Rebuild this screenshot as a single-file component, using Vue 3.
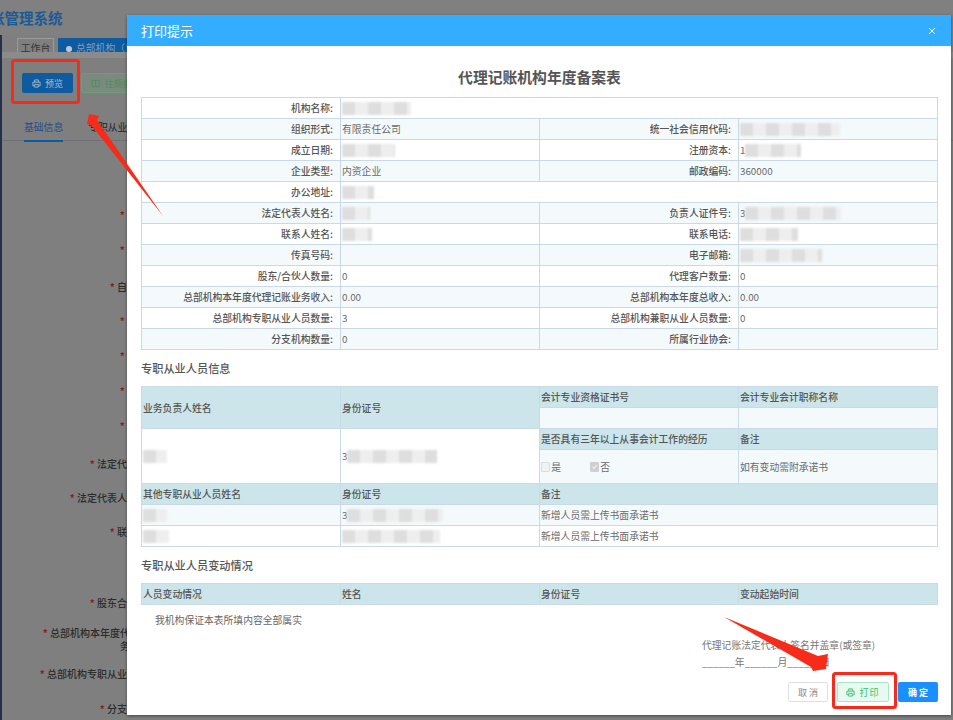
<script setup>
// Text value plus optional smudge: the reference has these cells blurred out.
const cell = (text = '', smudge = 0) => ({ text, smudge })

const infoRows = [
  { label: '机构名称:', value: cell('', 69) },
  { label: '组织形式:', value: cell('有限责任公司'), label2: '统一社会信用代码:', value2: cell('', 100) },
  { label: '成立日期:', value: cell('', 53), label2: '注册资本:', value2: cell('1', 56) },
  { label: '企业类型:', value: cell('内资企业'), label2: '邮政编码:', value2: cell('360000') },
  { label: '办公地址:', value: cell('', 32) },
  { label: '法定代表人姓名:', value: cell('', 28), label2: '负责人证件号:', value2: cell('3', 96) },
  { label: '联系人姓名:', value: cell('', 30), label2: '联系电话:', value2: cell('', 58) },
  { label: '传真号码:', value: cell(), label2: '电子邮箱:', value2: cell('', 82) },
  { label: '股东/合伙人数量:', value: cell('0'), label2: '代理客户数量:', value2: cell('0') },
  { label: '总部机构本年度代理记账业务收入:', value: cell('0.00'), label2: '总部机构本年度总收入:', value2: cell('0.00') },
  { label: '总部机构专职从业人员数量:', value: cell('3'), label2: '总部机构兼职从业人员数量:', value2: cell('0') },
  { label: '分支机构数量:', value: cell('0'), label2: '所属行业协会:', value2: cell() },
]

const otherStaff = [
  { name: 24, id: 96, idPrefix: '3' },
  { name: 26, id: 98, idPrefix: '' },
]

// Behind the dialog; height is the distance to the next row.
const formRows = [
  { text: '机构名称:', height: 35 },
  { text: '组织形式:', height: 37 },
  { text: '自有资金额:', height: 34 },
  { text: '成立日期:', height: 35 },
  { text: '注册资本:', height: 35 },
  { text: '企业类型:', height: 35 },
  { text: '办公地址:', height: 38 },
  { text: '法定代表人姓名:', height: 34 },
  { text: '法定代表人证件号码:', height: 34 },
  { text: '联系人姓名:', height: 71 },
  { text: '股东合伙人数量:', height: 30 },
  { text: '总部机构本年度代理记账业\n务收入(元):', height: 41 },
  { text: '总部机构专职从业人员数量:', height: 35 },
  { text: '分支机构数量:', height: 14 },
]
</script>

<template>
  <div class="page">
    <header class="topbar">
      <span class="brand">账管理系统</span>
    </header>

    <div class="shell">
      <aside class="rail"></aside>
      <main class="main">
        <div class="tabs">
          <span class="tab">工作台</span>
          <span class="tab active"><i class="dot"></i>总部机构（自</span>
        </div>
        <div class="band"></div>

        <div class="toolbar">
          <button class="tool primary">
            <svg class="ico" viewBox="0 0 10 10"><path d="M3 3.5V1h4v2.5M1 7.5V3.5h8v4H7.5M2.5 7.5H1M3 6h4v3H3z" /></svg>
            预览
          </button>
          <button class="tool ghost">
            <svg class="ico" viewBox="0 0 10 10"><path d="M1 1.5h8v7H1zM5 1.5v7" /></svg>
            往期备案
          </button>
        </div>

        <div class="subtabs">
          <span class="subtab current">基础信息</span>
          <span class="subtab">专职从业人员</span>
        </div>

        <div class="form">
          <div v-for="r in formRows" :key="r.text" class="form-row" :style="{ height: r.height + 'px' }">
            <div class="form-label"><b>*</b> {{ r.text }}</div>
          </div>
        </div>
      </main>
    </div>

    <section class="dialog">
      <div class="dialog-head">
        <span>打印提示</span>
        <svg class="close" viewBox="0 0 8 8"><path d="M1 1l6 6M7 1L1 7" /></svg>
      </div>

      <div class="dialog-body">
        <h2 class="sheet-title">代理记账机构年度备案表</h2>

        <table class="sheet">
          <colgroup><col /><col /><col /><col /></colgroup>
          <tr v-for="(r, i) in infoRows" :key="r.label" :class="{ stripe: i % 2 === 1 }">
            <td class="lbl">{{ r.label }}</td>
            <td :colspan="r.label2 ? 1 : 3">
              {{ r.value.text }}<i v-if="r.value.smudge" class="smudge" :style="{ width: r.value.smudge + 'px' }"></i>
            </td>
            <template v-if="r.label2">
              <td class="lbl">{{ r.label2 }}</td>
              <td>
                {{ r.value2.text }}<i v-if="r.value2.smudge" class="smudge" :style="{ width: r.value2.smudge + 'px' }"></i>
              </td>
            </template>
          </tr>
        </table>

        <h3 class="section">专职从业人员信息</h3>

        <table class="sheet">
          <colgroup><col /><col /><col /><col /></colgroup>
          <tr>
            <th rowspan="2">业务负责人姓名</th>
            <th rowspan="2">身份证号</th>
            <th>会计专业资格证书号</th>
            <th>会计专业会计职称名称</th>
          </tr>
          <tr class="stripe">
            <td></td>
            <td></td>
          </tr>
          <tr>
            <td rowspan="2"><i class="smudge name" style="width: 24px"></i></td>
            <td rowspan="2">3<i class="smudge" style="width: 90px"></i></td>
            <th>是否具有三年以上从事会计工作的经历</th>
            <th>备注</th>
          </tr>
          <tr class="stripe tall">
            <td>
              <div class="checks">
                <label class="check"><i class="box"></i>是</label>
                <label class="check"><i class="box on"><svg viewBox="0 0 8 8"><path d="M1.5 4l2 2 3-4" /></svg></i>否</label>
              </div>
            </td>
            <td>如有变动需附承诺书</td>
          </tr>
          <tr>
            <th>其他专职从业人员姓名</th>
            <th>身份证号</th>
            <th colspan="2">备注</th>
          </tr>
          <tr v-for="(s, i) in otherStaff" :key="i" :class="{ stripe: i === 0 }">
            <td><i class="smudge name" :style="{ width: s.name + 'px' }"></i></td>
            <td>{{ s.idPrefix }}<i class="smudge" :style="{ width: s.id + 'px' }"></i></td>
            <td colspan="2">新增人员需上传书面承诺书</td>
          </tr>
        </table>

        <h3 class="section">专职从业人员变动情况</h3>

        <table class="sheet">
          <colgroup><col /><col /><col /><col /></colgroup>
          <tr>
            <th>人员变动情况</th>
            <th>姓名</th>
            <th>身份证号</th>
            <th>变动起始时间</th>
          </tr>
        </table>

        <p class="pledge">我机构保证本表所填内容全部属实</p>

        <div class="sign">
          <div>代理记账法定代表人签名并盖章(或签章)</div>
          <div class="sign-date">______年______月______日</div>
        </div>

        <div class="actions">
          <button class="btn cancel">取 消</button>
          <button class="btn print">
            <svg class="ico" viewBox="0 0 10 10"><path d="M3 3.5V1h4v2.5M1 7.5V3.5h8v4H7.5M2.5 7.5H1M3 6h4v3H3z" /></svg>
            打印
          </button>
          <button class="btn ok">确 定</button>
        </div>
      </div>
    </section>

    <!-- Red markup drawn over the screenshot -->
    <svg class="markup" viewBox="0 0 953 720">
      <rect x="12.5" y="60.5" width="66" height="42" rx="2" />
      <rect x="833.5" y="673.5" width="62" height="34" rx="2" />
      <polygon points="89,114 99,116 97,120 163,216 92,126 87,124" />
      <polygon points="724,617 818,656 828,654 826,669 813,671 811,667" />
    </svg>
  </div>
</template>

<style scoped>
.page {
  position: relative;
  width: 953px;
  height: 720px;
  overflow: hidden;
  background: #7f7f7f;
  font-family: "Noto Sans CJK SC", "Liberation Sans", sans-serif;
  font-size: 9.8px;
  color: #666;
}

.topbar {
  height: 35px;
  display: flex;
  align-items: center;
  background: #808080;
}
.brand {
  margin-left: -10px;
  font-size: 14.5px;
  font-weight: 700;
  color: #1c5a96;
}

.shell {
  display: flex;
  height: 685px;
}
.rail {
  width: 2px;
  background: #27304a;
}
.main {
  flex: 1;
  min-width: 0;
}

.tabs {
  display: flex;
  gap: 4px;
  height: 17px;
  padding: 3px 0 0 15px;
  box-sizing: border-box;
  overflow: hidden;
}
.tab {
  flex: none;
  height: 20px;
  width: 37px;
  line-height: 18px;
  text-align: center;
  border: 1px solid #9a9a9a;
  box-sizing: border-box;
  color: #333;
}
.tab.active {
  width: 90px;
  padding-left: 7px;
  text-align: left;
  background: #0e5ba0;
  border-color: #0e5ba0;
  color: #7f9fbd;
  white-space: nowrap;
}
.dot {
  display: inline-block;
  width: 6px;
  height: 6px;
  margin-right: 4px;
  border-radius: 50%;
  background: #b9c9d8;
}
.band {
  height: 6px;
  background: #8b8b8b;
}

.toolbar {
  display: flex;
  gap: 8px;
  padding: 15px 0 0 20px;
}
.tool {
  display: inline-flex;
  align-items: center;
  justify-content: center;
  gap: 4px;
  height: 20px;
  padding: 0;
  border-radius: 2px;
  font: inherit;
  font-size: 9px;
}
.tool.primary {
  width: 51px;
  border: 0;
  background: #0e5ba0;
  color: #a9bfd4;
}
.tool.ghost {
  width: 70px;
  border: 1px solid #6e9c78;
  background: #7a8a7e;
  color: #4f8f5a;
}
.ico {
  width: 9px;
  height: 9px;
  fill: none;
  stroke: currentColor;
  stroke-width: 1;
}

.subtabs {
  display: flex;
  gap: 25px;
  margin-top: 27px;
  padding-left: 22px;
  height: 21px;
  border-bottom: 1px solid #6f6f78;
  box-sizing: border-box;
}
.subtab {
  height: 20px;
  line-height: 14px;
  color: #222;
  white-space: nowrap;
}
.subtab.current {
  color: #1a4f8c;
  border-bottom: 2px solid #0e5ba0;
}

.form {
  margin-top: 67px;
}
.form-row {
  width: 168px;
}
.form-label {
  text-align: right;
  line-height: 13px;
  white-space: pre-line;
  font-weight: 500;
  color: #2c2c2c;
  font-size: 10px;
}
.form-label b {
  color: #8a1f1f;
}

.dialog {
  position: absolute;
  left: 127px;
  top: 15px;
  width: 824px;
  height: 700px;
  display: flex;
  flex-direction: column;
  background: #fff;
  box-shadow: 0 1px 3px rgba(0, 0, 0, 0.45);
}
.dialog-head {
  display: flex;
  align-items: center;
  justify-content: space-between;
  height: 31px;
  padding: 0 15px 0 14px;
  background: #33adff;
  color: #fff;
  font-size: 13px;
  flex: none;
}
.close {
  width: 8px;
  height: 8px;
  fill: none;
  stroke: #fff;
  stroke-width: 1;
}
.dialog-body {
  flex: 1;
  display: flex;
  flex-direction: column;
  padding: 0 13px 13px 14px;
  min-height: 0;
}

.sheet-title {
  flex: none;
  margin: 0;
  height: 51px;
  padding-top: 16px;
  box-sizing: border-box;
  line-height: 30px;
  text-align: center;
  font-size: 14.8px;
  font-weight: 700;
  color: #555;
}
.section {
  margin: 0;
  height: 36px;
  line-height: 36px;
  font-size: 11.2px;
  font-weight: 500;
  color: #555;
  flex: none;
}

.sheet {
  width: 797px;
  table-layout: fixed;
  border-collapse: collapse;
  flex: none;
}
.sheet col {
  width: 25%;
}
.sheet td,
.sheet th {
  height: 20px;
  padding: 0 2px 0 1px;
  border: 1px solid #c8d9e9;
  line-height: 14px;
  text-align: left;
  font-weight: 400;
  color: #6a6a6a;
  white-space: nowrap;
  overflow: hidden;
}
.sheet th {
  background: #cce5ea;
  color: #555;
  font-weight: 500;
}
.sheet .lbl {
  text-align: right;
  padding-right: 7px;
  color: #555;
  font-weight: 500;
}
.stripe td {
  background: #f4fafb;
}
.sheet .tall td {
  height: 33px;
}

.smudge {
  display: inline-block;
  height: 13px;
  vertical-align: middle;
  background: repeating-linear-gradient(90deg, #dedede 0 13px, #eeeeee 13px 26px);
  filter: blur(1.2px);
}

.checks {
  display: flex;
  gap: 29px;
}
.check {
  display: inline-flex;
  align-items: center;
  gap: 1px;
  width: 20px;
}
.box {
  width: 8px;
  height: 8px;
  border: 1px solid #ddd;
  border-radius: 1px;
  background: #f2f2f2;
}
.box.on {
  background: #cfcfcf;
  border-color: #cfcfcf;
}
.box svg {
  display: block;
  fill: none;
  stroke: #fff;
  stroke-width: 1;
}

.pledge {
  flex: none;
  margin: 8px 0 0 14px;
  line-height: 14px;
  color: #666;
}
.sign {
  flex: none;
  margin: 11px 0 0 561px;
  line-height: 14px;
  font-size: 9.8px;
  color: #777;
  white-space: nowrap;
}
.sign-date {
  margin-top: 3px;
}

.actions {
  margin-top: auto;
  display: flex;
  justify-content: flex-end;
  gap: 9px;
}
.btn {
  display: inline-flex;
  align-items: center;
  justify-content: center;
  gap: 4px;
  height: 20px;
  padding: 0;
  border-radius: 2px;
  font: inherit;
  font-size: 9px;
}
.btn.cancel {
  width: 40px;
  border: 1px solid #dcdfe6;
  background: #fff;
  color: #888;
}
.btn.print {
  width: 52px;
  border: 1px solid #a8e8c4;
  background: #e8f9ef;
  color: #2cc36b;
  letter-spacing: 1px;
}
.btn.ok {
  width: 40px;
  border: 0;
  background: #1a90ff;
  color: #fff;
  font-weight: 700;
}

.markup {
  position: absolute;
  inset: 0;
  width: 953px;
  height: 720px;
  pointer-events: none;
}
.markup rect {
  fill: none;
  stroke: #f62b1a;
  stroke-width: 3;
}
.markup polygon {
  fill: #f62b1a;
}
</style>

<style>
html,
body {
  margin: 0;
  overflow: hidden;
}
</style>
